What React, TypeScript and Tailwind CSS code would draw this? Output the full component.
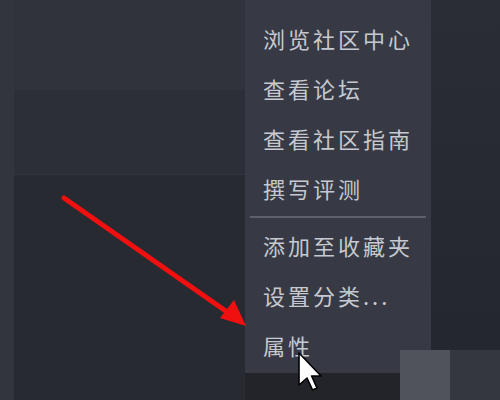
import React from 'react';

const items = ['浏览社区中心', '查看论坛', '查看社区指南', '撰写评测'];
const items2 = ['添加至收藏夹', '设置分类...', '属性'];

const MenuItem: React.FC<{ label: string }> = ({ label }) => (
    <div className="h-[50px] flex items-center pl-[18px] text-[22px] tracking-[3px] text-[#c6c9cf]">
        {label}
    </div>
);

const App: React.FC = () => {
    return (
        <div
            className="relative w-[500px] h-[400px] overflow-hidden flex bg-[#272a31]"
            style={{ fontFamily: '"Noto Sans CJK SC", "Noto Sans", sans-serif' }}
        >
            {/* left strip */}
            <div className="w-[14px] h-full bg-[#32353e]" />

            {/* main content area */}
            <div className="w-[231px] h-full flex flex-col">
                <div className="h-[90px] bg-[#30333c]" />
                <div className="h-[85px] bg-[#2c2f37] border-b border-[#33363e]" />
                <div className="flex-1 bg-[#272a31]" />
            </div>

            {/* context menu column */}
            <div className="w-[186px] h-full flex flex-col bg-[#222429]">
                <div className="h-[373px] bg-[#373a45] pt-[13px]">
                    {items.map((label) => (
                        <MenuItem key={label} label={label} />
                    ))}
                    <div className="h-[7px] flex items-center px-[5px]">
                        <div className="w-full h-[2px] bg-[#5d616b]" />
                    </div>
                    {items2.map((label) => (
                        <MenuItem key={label} label={label} />
                    ))}
                </div>
            </div>

            {/* right area */}
            <div className="flex-1 h-full flex flex-col bg-gradient-to-b from-[#2a2d34] to-[#23262d]">
                <div className="flex-1" />
                <div className="h-[50px] bg-[#34373e]" />
            </div>

            {/* grey block at bottom */}
            <div className="absolute left-[400px] top-[350px] w-[50px] h-[50px] bg-[#50535b]" />

            {/* red annotation arrow */}
            <svg className="absolute inset-0 pointer-events-none" width="500" height="400" viewBox="0 0 500 400">
                <line x1="64" y1="198" x2="230" y2="314" stroke="#f01010" strokeWidth="5" strokeLinecap="round" />
                <polygon points="246,326 220,318 234,300" fill="#f01010" />
            </svg>

            {/* mouse cursor */}
            <svg className="absolute left-[297px] top-[351px]" width="26" height="42" viewBox="-1 -1 13 21">
                <path
                    d="M0 0 L0 16 L4 12.5 L6.8 18.5 L9 17.5 L6.3 11.5 L11 11.5 Z"
                    fill="#ffffff"
                    stroke="#000000"
                    strokeWidth="0.8"
                    strokeLinejoin="round"
                />
            </svg>
        </div>
    );
};

export default App;
